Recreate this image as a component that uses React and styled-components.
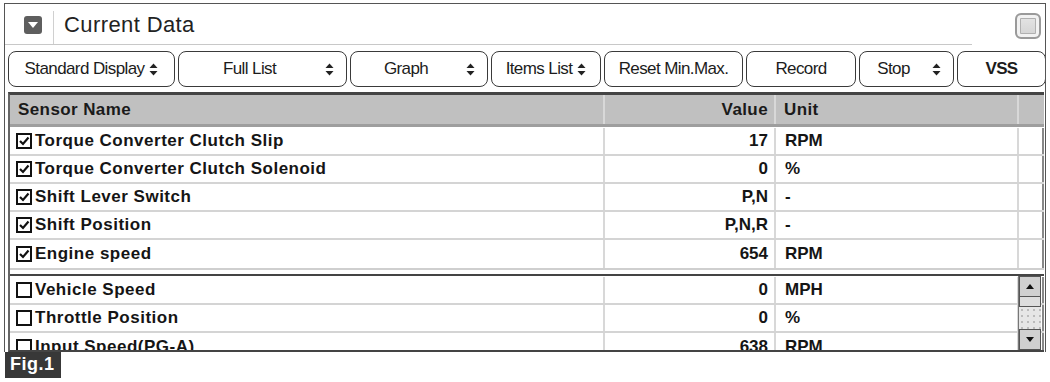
import React from "react";
import styled, { createGlobalStyle } from "styled-components";

const GlobalStyle = createGlobalStyle`
  html, body {
    margin: 0;
    padding: 0;
    background: #fff;
    font-family: "Liberation Sans", Arial, sans-serif;
  }
`;

const buttons = [
  { label: "Standard Display", width: 167, select: true, tight: true },
  { label: "Full List", width: 169, select: true },
  { label: "Graph", width: 138, select: true },
  { label: "Items List", width: 110, select: true, tight: true },
  { label: "Reset Min.Max.", width: 139 },
  { label: "Record", width: 110 },
  { label: "Stop", width: 95, select: true },
  { label: "VSS", width: 89, bold: true },
];

const topRows = [
  { name: "Torque Converter Clutch Slip", value: "17", unit: "RPM" },
  { name: "Torque Converter Clutch Solenoid", value: "0", unit: "%" },
  { name: "Shift Lever Switch", value: "P,N", unit: "-" },
  { name: "Shift Position", value: "P,N,R", unit: "-" },
  { name: "Engine speed", value: "654", unit: "RPM" },
];

const bottomRows = [
  { name: "Vehicle Speed", value: "0", unit: "MPH" },
  { name: "Throttle Position", value: "0", unit: "%" },
  { name: "Input Speed(PG-A)", value: "638", unit: "RPM" },
];

const Arrows = () => (
  <svg width="9" height="13" viewBox="0 0 9 13">
    <path d="M4.5 0.5 L8.5 5 L0.5 5 Z" fill="#222" />
    <path d="M0.5 8 L8.5 8 L4.5 12.5 Z" fill="#222" />
  </svg>
);

const Check = ({ checked }) => (
  <svg width="16" height="16" viewBox="0 0 16 16">
    <rect x="1" y="1" width="14" height="14" fill="#fff" stroke="#111" strokeWidth="2" />
    {checked && (
      <path d="M4 8 L7 11 L12.5 4.5" fill="none" stroke="#111" strokeWidth="2.2" />
    )}
  </svg>
);

const Row = ({ row, checked }) => (
  <DataRow>
    <NameCell>
      <Check checked={checked} />
      <span>{row.name}</span>
    </NameCell>
    <ValueCell>{row.value}</ValueCell>
    <UnitCell>{row.unit}</UnitCell>
    <BlankCell />
  </DataRow>
);

const App = () => {
  return (
    <>
      <GlobalStyle />
      <Page>
        <Frame>
          <Header>
            <Collapse>
              <svg width="10" height="6" viewBox="0 0 10 6">
                <path d="M0 0 L10 0 L5 6 Z" fill="#fff" />
              </svg>
            </Collapse>
            <Divider />
            <Title>Current Data</Title>
            <Maximize />
          </Header>

          <Toolbar>
            {buttons.map((b) => (
              <ToolButton key={b.label} $width={b.width} $bold={b.bold} $split={b.select && !b.tight}>
                <span>{b.label}</span>
                {b.select && <Arrows />}
              </ToolButton>
            ))}
          </Toolbar>

          <Table>
            <HeadRow>
              <HeadCell>Sensor Name</HeadCell>
              <HeadCell $right>Value</HeadCell>
              <HeadCell>Unit</HeadCell>
              <HeadCell />
            </HeadRow>
            <Pane>
              {topRows.map((r) => (
                <Row key={r.name} row={r} checked />
              ))}
            </Pane>
            <LowerPane>
              <Rows>
                {bottomRows.map((r) => (
                  <Row key={r.name} row={r} />
                ))}
              </Rows>
              <ScrollBar>
                <ScrollButton>
                  <svg width="8" height="5" viewBox="0 0 8 5">
                    <path d="M0 5 L8 5 L4 0 Z" fill="#111" />
                  </svg>
                </ScrollButton>
                <Thumb />
                <Track />
                <ScrollButton>
                  <svg width="8" height="5" viewBox="0 0 8 5">
                    <path d="M0 0 L8 0 L4 5 Z" fill="#111" />
                  </svg>
                </ScrollButton>
              </ScrollBar>
            </LowerPane>
          </Table>
        </Frame>
        <FigLabel>Fig.1</FigLabel>
      </Page>
    </>
  );
};

const Page = styled.div`
  width: 1050px;
  height: 382px;
  padding: 3px 0 0 4px;
  box-sizing: border-box;
`;

const Frame = styled.div`
  width: 1042px;
  height: 349px;
  border: 1px solid #555;
  border-bottom: none;
  box-sizing: border-box;
  display: flex;
  flex-direction: column;
  overflow: hidden;
`;

const Header = styled.div`
  height: 41px;
  flex-shrink: 0;
  display: flex;
  align-items: center;
  position: relative;
  padding-left: 19px;

  &::after {
    content: "";
    position: absolute;
    left: 0;
    bottom: 0;
    width: 967px;
    height: 1px;
    background: #c8c8c8;
  }
`;

const Collapse = styled.div`
  width: 18px;
  height: 18px;
  border-radius: 3px;
  background: #5e5e5e;
  display: flex;
  align-items: center;
  justify-content: center;
`;

const Divider = styled.div`
  width: 1px;
  align-self: stretch;
  margin: 7px 10px 0 11px;
  background: #d0d0d0;
`;

const Title = styled.div`
  font-size: 22px;
  letter-spacing: 0.4px;
  color: #222;
  flex: 1;
  padding-top: 1px;
`;

const Maximize = styled.div`
  width: 26px;
  height: 26px;
  margin: 3px 4px 0 0;
  border: 2px solid #9a9a9a;
  border-radius: 6px;
  box-sizing: border-box;
  background: linear-gradient(#e6e6e6, #d2d2d2);
  box-shadow: inset 0 0 0 3px #f2f2f2, inset 0 0 0 4px #b0b0b0;
`;

const Toolbar = styled.div`
  display: flex;
  gap: 3px;
  padding: 6px 0 0 3px;
  height: 42px;
  flex-shrink: 0;
  box-sizing: border-box;
`;

const ToolButton = styled.div`
  width: ${(p) => p.$width}px;
  height: 36px;
  box-sizing: border-box;
  border: 1px solid #3a3a3a;
  border-radius: 8px;
  display: flex;
  align-items: center;
  justify-content: ${(p) => (p.$split ? "space-between" : "center")};
  gap: 5px;
  padding: ${(p) => (p.$split ? "0 12px 0 0" : "0 4px")};
  font-size: 17px;
  font-weight: ${(p) => (p.$bold ? "bold" : "normal")};
  letter-spacing: -0.6px;
  color: #1c1c1c;
  flex-shrink: 0;
  white-space: nowrap;

  span {
    flex: ${(p) => (p.$split ? "1" : "none")};
    text-align: center;
  }
`;

const Table = styled.div`
  margin: 5px 0 0 3px;
  width: 1036px;
  flex: 1;
  border-top: 3px solid #444;
  border-left: 2px solid #666;
  border-bottom: 2px solid #444;
  box-sizing: border-box;
  display: flex;
  flex-direction: column;
  overflow: hidden;
`;

const columns = "595px 171px 243px 1fr";

const HeadRow = styled.div`
  display: grid;
  grid-template-columns: ${columns};
  height: 29px;
  flex-shrink: 0;
  background: #c0c0c0;
  border-bottom: 3px solid #9e9e9e;
`;

const HeadCell = styled.div`
  display: flex;
  align-items: center;
  justify-content: ${(p) => (p.$right ? "flex-end" : "flex-start")};
  padding: 0 ${(p) => (p.$right ? "6px" : "8px")};
  font-size: 17px;
  font-weight: bold;
  letter-spacing: 0.4px;
  color: #1a1a1a;
  border-right: 2px solid #d8d8d8;
  &:last-child {
    border-right: none;
  }
`;

const Pane = styled.div`
  display: flex;
  flex-direction: column;
  flex-shrink: 0;
  padding-top: 1px;
  border-bottom: 2px solid #cfcfcf;
`;

const LowerPane = styled.div`
  display: flex;
  margin-top: 4px;
  border-top: 2px solid #444;
  flex: 1;
  overflow: hidden;
  position: relative;
`;

const Rows = styled.div`
  flex: 1;
  display: flex;
  flex-direction: column;
  padding-top: 1px;
`;

const DataRow = styled.div`
  display: grid;
  grid-template-columns: ${columns};
  height: 28px;
  flex-shrink: 0;
  border-bottom: 2px solid #d4d4d4;
  box-sizing: border-box;
  font-size: 17px;
  font-weight: bold;
  color: #151515;
  &:last-child {
    border-bottom: none;
  }
`;

const Cell = styled.div`
  display: flex;
  align-items: center;
  border-right: 2px solid #d8d8d8;
  white-space: nowrap;
  overflow: hidden;
`;

const NameCell = styled(Cell)`
  gap: 3px;
  padding-left: 6px;
  letter-spacing: 0.5px;
`;

const ValueCell = styled(Cell)`
  justify-content: flex-end;
  padding-right: 6px;
`;

const UnitCell = styled(Cell)`
  padding-left: 9px;
`;

const BlankCell = styled(Cell)`
  border-right: 2px solid #888;
`;

const ScrollBar = styled.div`
  position: absolute;
  right: 3px;
  top: 0;
  bottom: 0;
  width: 22px;
  display: flex;
  flex-direction: column;
  background: #e6e6e6;
  border-left: 1px solid #777;
`;

const ScrollButton = styled.div`
  height: 21px;
  background: #d0d0d0;
  border: 1px solid #555;
  box-sizing: border-box;
  display: flex;
  align-items: center;
  justify-content: center;
`;

const Thumb = styled.div`
  height: 10px;
  background: #ddd;
  border: 1px solid #555;
  border-top: none;
  box-sizing: border-box;
`;

const Track = styled.div`
  flex: 1;
  background-image: radial-gradient(#bbb 0.8px, transparent 1px);
  background-size: 6px 6px;
`;

const FigLabel = styled.div`
  display: inline-block;
  margin-left: 1px;
  background: #383838;
  color: #fff;
  font-size: 18px;
  font-weight: bold;
  padding: 2px 6px 3px 5px;
  letter-spacing: 0.5px;
`;

export default App;
